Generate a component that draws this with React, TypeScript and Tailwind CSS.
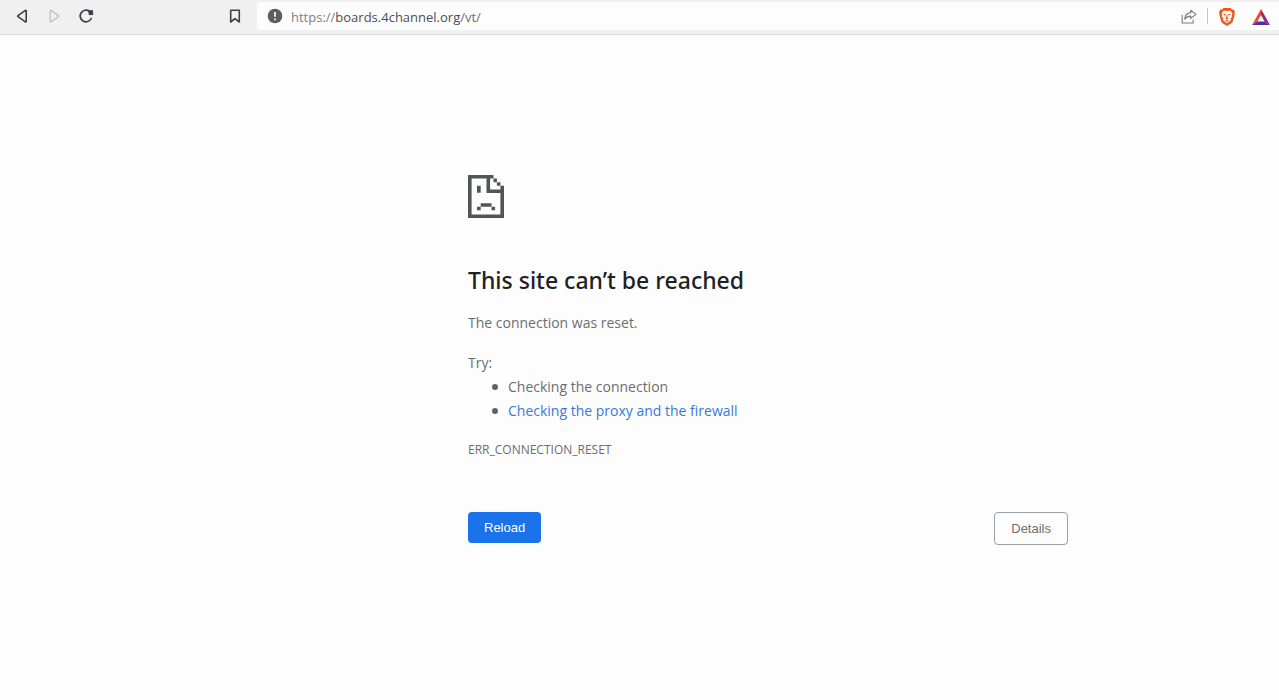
import React from 'react';

function Toolbar() {
  return (
    <header className="flex h-[35px] items-start border-b border-[#dadcdc] bg-[#f0f0f0] pt-0.5">
      <nav aria-label="Navigation" className="flex h-7 w-[257px] shrink-0 items-center pl-3.5">
        <button type="button" aria-label="Back" className="flex h-6 w-4 items-center justify-center">
          <svg width="16" height="16" viewBox="0 0 16 16" fill="none" stroke="#3c4043" strokeWidth="1.6" strokeLinejoin="round">
            <path d="M12.2 2.8v10.6c0 .4-.4.6-.8.4L4 8.7c-.4-.3-.4-.8 0-1.1l7.4-5.2c.4-.2.8 0 .8.4Z" />
          </svg>
        </button>
        <button type="button" aria-label="Forward" className="ml-4 flex h-6 w-4 items-center justify-center">
          <svg width="16" height="16" viewBox="0 0 16 16" fill="none" stroke="#bdbfc0" strokeWidth="1.3" strokeLinejoin="round">
            <path d="M4.2 2.8v10.6c0 .4.4.6.8.4l7.4-5.1c.4-.3.4-.8 0-1.1L5 2.4c-.4-.2-.8 0-.8.4Z" />
          </svg>
        </button>
        <button type="button" aria-label="Reload page" className="ml-4 flex h-6 w-4 items-center justify-center">
          <svg width="16" height="16" viewBox="0 0 16 16" fill="none">
            <path d="M13.2 10.5A5.8 5.8 0 1 1 11.6 3.5" stroke="#3c4043" strokeWidth="1.7" strokeLinecap="round" />
            <path d="M10.8 3 14.5 2.6 14.8 6.5 11.2 6.7Z" fill="#3c4043" stroke="#3c4043" strokeWidth="1" strokeLinejoin="round" />
          </svg>
        </button>
        <button type="button" aria-label="Bookmark" className="mr-3.5 ml-auto flex h-6 w-4 items-center justify-center">
          <svg width="16" height="16" viewBox="0 0 16 16" fill="none" stroke="#3c4043" strokeWidth="1.6" strokeLinejoin="round">
            <path d="M3.7 2.2h8.6v11.8L8 10.6 3.7 14Z" />
          </svg>
        </button>
      </nav>
      <div className="flex h-7 min-w-0 flex-1 items-center rounded-l bg-[#fdfdfd] pr-[9px] pl-2.5">
        <svg width="16" height="16" viewBox="0 0 16 16" aria-hidden="true" className="shrink-0">
          <circle cx="8" cy="8" r="7.3" fill="#5a5f63" />
          <path d="M8 4v4.8M8 10.5v1.7" stroke="#f8f8f8" strokeWidth="1.7" />
        </svg>
        <a href="https://boards.4channel.org/vt/" className="ml-2 flex-1 truncate pt-0.5 text-[13px] leading-6 text-[#4b4f52]">
          <span className="text-[#7c8083]">https://</span>boards.4channel.org<span className="text-[#6b6f72]">/vt/</span>
        </a>
        <button type="button" aria-label="Share" className="flex h-6 w-4 shrink-0 items-center justify-center">
          <svg width="16" height="16" viewBox="0 0 16 16" fill="none" stroke="#777b7e" strokeWidth="1.1" strokeLinejoin="round" strokeLinecap="round">
            <path d="M1.2 7v8h11v-3" />
            <path d="M9.7 2.3 14.9 6.4 9.7 10.4V8.1C7 8 5.2 9 3.7 11.2 4 7.3 6.2 4.9 9.7 4.6Z" />
          </svg>
        </button>
        <span className="ml-2.5 h-4 w-px bg-[#c3c5c6]" />
        <button type="button" aria-label="Brave Shields" className="ml-2.5 flex h-6 w-[18px] shrink-0 items-center justify-center pt-px">
          <svg width="18" height="20" viewBox="0 0 18 20">
            <path d="M5.5 1h7l1.5 1.5 1.5-.1L17 4.7l-.5 1.5.2 1.3-1.7 6.6c-.3 1-.8 1.6-1.6 2.2L9 19l-4.4-2.700c-.8-.6-1.300-1.200-1.600-2.200L1.300 7.500l.2-1.300L1 4.700l1.500-2.300 1.500.1Z" fill="#ea5a20" />
            <path d="m5.7 3.5 1.800.5L9 3.700l1.500.3 1.800-.5 2 2.700-.4 1.500.3 1.500-1.600 2.700.2 1.700L9 16.200l-3.800-2.600.2-1.700-1.600-2.700.3-1.500-.4-1.500Z" fill="#fff4ee" />
            <path d="m5.3 6.800 2.600.5-.5 1.100-1.700-.5ZM12.700 6.800l-2.600.5.5 1.100 1.700-.5ZM8.500 8h1l.2 2.800.9.6L9 12.500l-1.600-1.100.9-.6ZM7.100 13.700 9 13l1.900.7L9 15Z" fill="#ea5a20" />
          </svg>
        </button>
        <button type="button" aria-label="Brave Rewards" className="ml-4 flex h-6 w-[18px] shrink-0 items-center justify-center pt-0.5">
          <svg width="18" height="16" viewBox="0 0 18 16">
            <path d="M9 0 0 16 5.400 12.400 9 6Z" fill="#ef4a35" />
            <path d="M9 0 18 16 12.600 12.400 9 6Z" fill="#96257b" />
            <path d="M0 16h18l-5.400-3.600H5.400Z" fill="#542fa0" />
          </svg>
        </button>
      </div>
    </header>
  );
}

function SadPage() {
  return (
    <svg width="36" height="43" viewBox="0 0 36 43" fill="#535456" aria-hidden="true">
      <path d="M0 0h25.5v3.6H3.6v36h28.8V18H18.5V3.6h3.6v10.8h10.3v-3.6H36V43H0Z" />
      <path d="M25.5 3.6h3.4v3.6h-3.4ZM28.9 7.2h3.5v3.6h-3.5Z" />
      <path d="M9 10.8h3.7v7H9ZM12.7 28.3h10.8v3.5H12.7ZM9 31.8h3.7v3.4H9ZM23.5 31.8h3.6v3.4h-3.6Z" />
    </svg>
  );
}

function Suggestion({ children }: { children: React.ReactNode }) {
  return (
    <li className="flex items-center gap-2.5 before:size-1.5 before:rounded-full before:bg-[#606366]">
      {children}
    </li>
  );
}

export default function App() {
  return (
    <div className="min-h-screen bg-[#fdfdfd] font-['Open_Sans','Noto_Sans',sans-serif] text-sm leading-6 text-[#6b6e71]">
      <Toolbar />
      <main className="ml-[468px] max-w-[600px] pt-[140px] pb-10">
        <SadPage />
        <h1 className="mt-11 font-['Noto_Sans','Open_Sans',sans-serif] text-[23px] leading-9 font-medium text-[#202124]">This site can’t be reached</h1>
        <p className="mt-[13px]">The connection was reset.</p>
        <p className="mt-4">Try:</p>
        <ul className="pl-6">
          <Suggestion>Checking the connection</Suggestion>
          <Suggestion><a href="#buttons" className="text-[#3b78d8]">Checking the proxy and the firewall</a></Suggestion>
        </ul>
        <p className="mt-[15px] text-xs leading-6">ERR_CONNECTION_RESET</p>
        <div id="buttons" className="mt-[50px] flex items-start justify-between font-['Liberation_Sans',sans-serif] text-[13px] leading-[19px]">
          <button type="button" className="rounded bg-[#1a73e8] px-4 py-1.5 text-white">Reload</button>
          <button type="button" className="rounded border border-[#9aa0a6] px-4 py-1.5">Details</button>
        </div>
      </main>
    </div>
  );
}
